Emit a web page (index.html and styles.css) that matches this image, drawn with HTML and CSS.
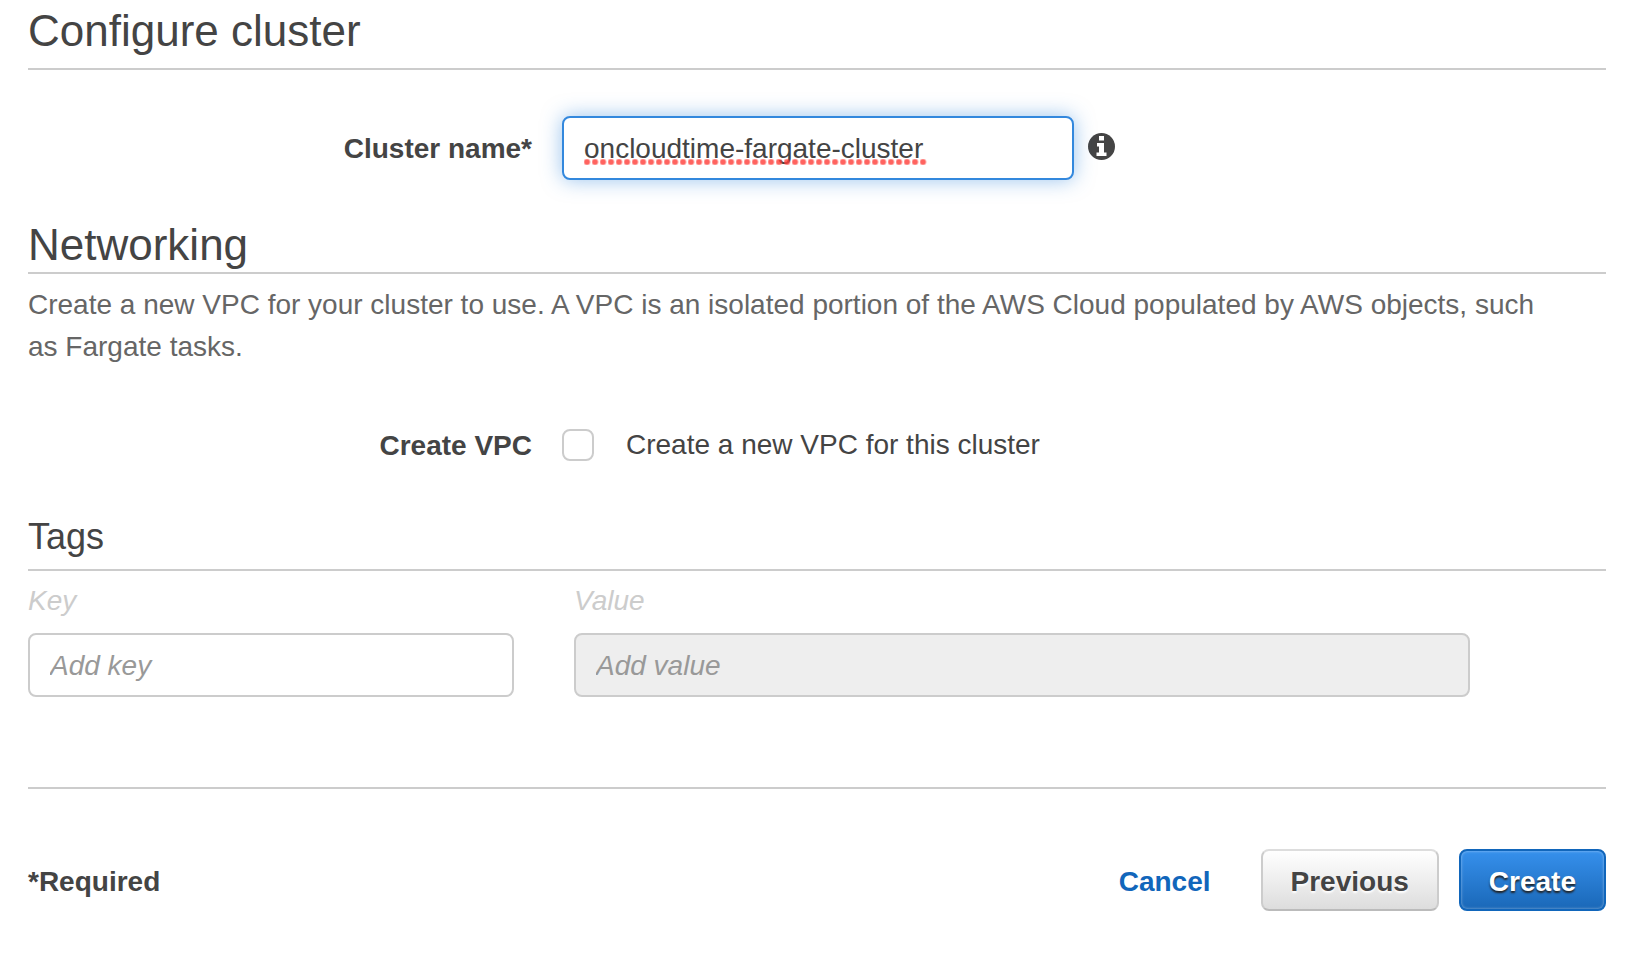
FILE: index.html
```html
<!DOCTYPE html>
<html lang="en">
<head>
<meta charset="utf-8">
<title>Configure cluster</title>
<link rel="stylesheet" href="styles.css">
</head>
<body>
<form class="page">
  <section>
    <h1 class="heading heading-first">Configure cluster</h1>
    <div class="field">
      <label class="field-label" for="cluster-name">Cluster name*</label>
      <div class="field-control">
        <span class="spelling">
          <input class="input input-focused" id="cluster-name" type="text" value="oncloudtime-fargate-cluster" spellcheck="false">
        </span>
        <svg class="info" viewBox="0 0 27 27" role="img" aria-label="Information">
          <circle cx="13.5" cy="13.5" r="13.5" fill="#444"/>
          <path d="M11 3h5v4.500h-5zM9 10h7v9.500h2.500V23H8.500v-3.500H11v-6H9z" fill="#fff"/>
        </svg>
      </div>
    </div>
  </section>

  <section>
    <h2 class="heading heading-networking">Networking</h2>
    <p class="description">Create a new VPC for your cluster to use. A VPC is an isolated portion of the AWS Cloud populated by AWS objects, such as Fargate tasks.</p>
    <div class="field field-check">
      <span class="field-label" id="vpc-label">Create VPC</span>
      <label class="check-option">
        <input class="checkbox" type="checkbox" aria-describedby="vpc-label">
        Create a new VPC for this cluster
      </label>
    </div>
  </section>

  <section>
    <h3 class="heading heading-tags">Tags</h3>
    <div class="tags">
      <div class="tag">
        <label class="tag-label" for="tag-key">Key</label>
        <input class="input" id="tag-key" type="text" placeholder="Add key">
      </div>
      <div class="tag">
        <label class="tag-label" for="tag-value">Value</label>
        <input class="input" id="tag-value" type="text" placeholder="Add value" disabled>
      </div>
    </div>
  </section>

  <footer class="footer">
    <span class="required">*Required</span>
    <a class="cancel" href="#">Cancel</a>
    <button class="button" type="button">Previous</button>
    <button class="button button-primary" type="button">Create</button>
  </footer>
</form>
</body>
</html>
```
FILE: styles.css
```css
* {
  box-sizing: border-box;
}

body {
  margin: 0;
  background: #fff;
  color: #444;
  font-family: "Helvetica Neue", "Liberation Sans", Arial, sans-serif;
  font-size: 28px;
  line-height: 42px;
}

.page {
  padding: 5px 38px 44px 28px;
}

.heading {
  margin: 0;
  border-bottom: 2px solid #ccc;
  font-size: 44px;
  font-weight: 400;
  line-height: 52px;
}

.heading-first {
  padding-bottom: 11px;
}

.heading-networking {
  margin-top: 39px;
  padding-bottom: 1px;
}

.heading-tags {
  margin-top: 53px;
  padding-bottom: 10px;
  font-size: 36px;
  line-height: 44px;
}

.description {
  margin: 10px 0 0;
  padding-right: 40px;
  color: #666;
}

.field {
  display: grid;
  grid-template-columns: 504fr 1044fr;
  align-items: center;
  gap: 30px;
  margin-top: 46px;
}

.field-check {
  margin-top: 60px;
  line-height: 32px;
}

.field-label {
  padding-top: 2px;
  font-weight: 700;
  text-align: right;
}

.field-control {
  display: flex;
  align-items: center;
  gap: 14px;
}

.input {
  display: block;
  width: 100%;
  height: 64px;
  padding: 2px 20px 0;
  border: 2px solid #ccc;
  border-radius: 8px;
  background: #fff;
  color: #444;
  font: inherit;
  outline: none;
}

.input::placeholder {
  color: #999;
  font-style: italic;
  opacity: 1;
}

.input:disabled {
  background: #eee;
}

.input-focused {
  border-color: #3388dd;
  box-shadow: 0 0 20px rgba(51, 136, 221, 0.5);
}

.spelling {
  position: relative;
  width: 512px;
}

/* Row of dots under the misspelled word */
.spelling::after {
  content: "";
  position: absolute;
  left: 22px;
  bottom: 15px;
  width: 343px;
  height: 6px;
  background: radial-gradient(circle at 3px 3px, rgba(255, 60, 55, 0.8) 2px, rgba(255, 60, 55, 0) 4px) 0 0 / 8px 6px;
  pointer-events: none;
}

.info {
  width: 27px;
  height: 27px;
  margin-bottom: 4px;
}

.check-option {
  display: flex;
  align-items: center;
  gap: 32px;
}

.checkbox {
  appearance: none;
  width: 32px;
  height: 32px;
  margin: 0;
  border: 2px solid #ccc;
  border-radius: 8px;
  background: #fff;
}

.tags {
  display: grid;
  grid-template-columns: 486fr 896fr;
  gap: 60px;
  margin-top: 9px;
  padding-right: 136px;
}

.tag {
  display: grid;
  gap: 11px;
}

.tag-label {
  color: #ccc;
  font-style: italic;
}

.footer {
  display: flex;
  align-items: center;
  gap: 20px;
  margin-top: 90px;
  padding-top: 60px;
  border-top: 2px solid #ccc;
  font-weight: 700;
}

.required {
  margin-right: auto;
  padding-top: 3px;
}

.cancel {
  margin-right: 30px;
  padding-top: 3px;
  color: #1166bb;
  text-decoration: none;
}

.button {
  height: 62px;
  padding: 3px 28px 0;
  border: 2px solid;
  border-color: #ddd #ccc #bbb;
  border-radius: 8px;
  background: linear-gradient(#fff, #ddd);
  color: #444;
  font: inherit;
  text-shadow: 0 2px 2px #fff;
}

.button-primary {
  border-color: #1166bb;
  background: linear-gradient(#3690ec, #1a68b8);
  box-shadow: inset 0 0 3px rgba(255, 255, 255, 0.5);
  color: #fff;
  text-shadow: 0 2px 2px #222;
}
```
